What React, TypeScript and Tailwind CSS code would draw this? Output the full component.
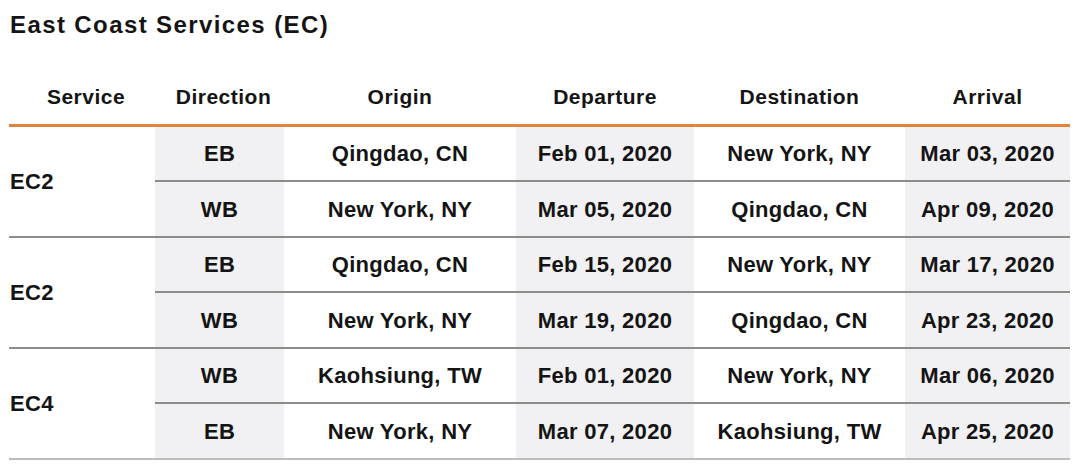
import React from "react";

type Row = {
  dir: string;
  origin: string;
  dep: string;
  dest: string;
  arr: string;
};

type Group = {
  service: string;
  rows: [Row, Row];
};

const groups: Group[] = [
  {
    service: "EC2",
    rows: [
      { dir: "EB", origin: "Qingdao, CN", dep: "Feb 01, 2020", dest: "New York, NY", arr: "Mar 03, 2020" },
      { dir: "WB", origin: "New York, NY", dep: "Mar 05, 2020", dest: "Qingdao, CN", arr: "Apr 09, 2020" },
    ],
  },
  {
    service: "EC2",
    rows: [
      { dir: "EB", origin: "Qingdao, CN", dep: "Feb 15, 2020", dest: "New York, NY", arr: "Mar 17, 2020" },
      { dir: "WB", origin: "New York, NY", dep: "Mar 19, 2020", dest: "Qingdao, CN", arr: "Apr 23, 2020" },
    ],
  },
  {
    service: "EC4",
    rows: [
      { dir: "WB", origin: "Kaohsiung, TW", dep: "Feb 01, 2020", dest: "New York, NY", arr: "Mar 06, 2020" },
      { dir: "EB", origin: "New York, NY", dep: "Mar 07, 2020", dest: "Kaohsiung, TW", arr: "Apr 25, 2020" },
    ],
  },
];

const cols = "grid grid-cols-[146px_129px_232px_178px_211px_165px]";
const cell = "flex items-center justify-center text-[22px] font-bold tracking-[0.3px] text-[#141414]";
const head = "flex items-center justify-center text-[21px] font-bold tracking-[0.5px] text-[#141414] pb-[2px]";

function Cells({ row, first, last }: { row: Row; first: boolean; last: boolean }) {
  const h = first ? "h-[55px]" : "h-[56px]";
  const line = last ? "border-b-2 border-[#bdbdbd]" : "border-b-2 border-[#8c8c8c]";
  return (
    <>
      <div className={`${cell} ${h} ${line} bg-[#f1f0f2]`}>{row.dir}</div>
      <div className={`${cell} ${h} ${line} bg-white`}>{row.origin}</div>
      <div className={`${cell} ${h} ${line} bg-[#f1f0f2]`}>{row.dep}</div>
      <div className={`${cell} ${h} ${line} bg-white`}>{row.dest}</div>
      <div className={`${cell} ${h} ${line} bg-[#f1f0f2]`}>{row.arr}</div>
    </>
  );
}

export default function App() {
  return (
    <div className="w-[1080px] h-[472px] bg-white font-[family-name:'Liberation_Sans',Arial,sans-serif] overflow-hidden">
      <h1 className="pl-[10px] pt-[9px] text-[24px] font-bold tracking-[1.4px] text-[#141414] leading-[32px]">
        East Coast Services (EC)
      </h1>
      <div className="ml-[9px] mt-[31px] w-[1061px]">
        <div className={`${cols} h-[55px] border-b-[3px] border-[#e2823f]`}>
          <div className={`${head} pl-[8px]`}>Service</div>
          <div className={`${head} pl-[8px]`}>Direction</div>
          <div className={head}>Origin</div>
          <div className={head}>Departure</div>
          <div className={head}>Destination</div>
          <div className={head}>Arrival</div>
        </div>
        {groups.map((g, gi) => (
          <div key={gi} className={`${cols} grid-rows-[55px_56px]`}>
            <div
              className={`row-span-2 flex items-center pl-[1px] text-[22px] font-bold tracking-[0.3px] text-[#141414] border-b-2 ${
                gi === groups.length - 1 ? "border-[#bdbdbd]" : "border-[#8c8c8c]"
              }`}
            >
              {g.service}
            </div>
            <Cells row={g.rows[0]} first last={false} />
            <Cells row={g.rows[1]} first={false} last={gi === groups.length - 1} />
          </div>
        ))}
      </div>
    </div>
  );
}
